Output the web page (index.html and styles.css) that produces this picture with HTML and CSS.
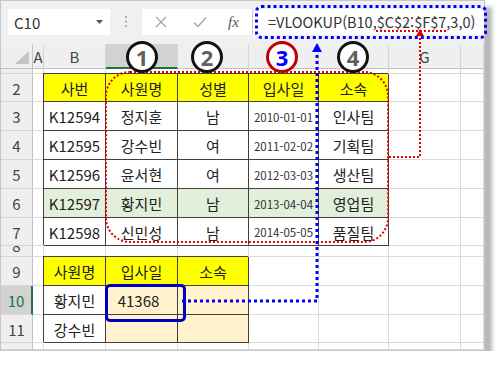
FILE: index.html
```html
<!DOCTYPE html>
<html lang="ko">
<head>
<meta charset="utf-8">
<title>VLOOKUP</title>
<link rel="stylesheet" href="styles.css">
</head>
<body>
<div class="frame">
  <div class="fbar">
    <div class="namebox"><span>C10</span><svg width="7" height="4" viewBox="0 0 7 4"><polygon points="0,0 7,0 3.5,4" fill="#555"/></svg></div>
    <div class="sep"><svg width="4" height="14" viewBox="0 0 4 14"><circle cx="2" cy="2" r="1" fill="#999"/><circle cx="2" cy="6.5" r="1" fill="#999"/><circle cx="2" cy="11" r="1" fill="#999"/></svg></div>
    <div class="btns">
      <svg class="x" width="12" height="12" viewBox="0 0 12 12"><path d="M1 1L11 11M11 1L1 11" stroke="#a8a8a8" stroke-width="1.4" fill="none"/></svg>
      <svg class="ok" width="14" height="12" viewBox="0 0 14 12"><path d="M1 6.5L5 10.5L13 1.5" stroke="#a8a8a8" stroke-width="1.5" fill="none"/></svg>
      <span class="fx">fx</span>
    </div>
    <div class="formula">=VLOOKUP(B10,<span class="ref">$C$2:$F$7</span>,3,0)</div>
  </div>
  <div class="sheet">
    <div class="c corner"><svg width="14" height="13" viewBox="0 0 14 13"><polygon points="0,13 14,0 14,13" fill="#c4c4c4"/></svg></div>
    <div class="c ch">A</div><div class="c ch">B</div><div class="c ch sel"></div><div class="c ch"></div><div class="c ch"></div><div class="c ch"></div><div class="c ch">G</div><div class="c ch"></div>

    <div class="c rh"></div><div class="c"></div><div class="c"></div><div class="c"></div><div class="c"></div><div class="c"></div><div class="c"></div><div class="c"></div><div class="c"></div>

    <div class="c rh">2</div><div class="c"></div><div class="c t y">사번</div><div class="c t y">사원명</div><div class="c t y">성별</div><div class="c t y">입사일</div><div class="c t y">소속</div><div class="c"></div><div class="c"></div>

    <div class="c rh">3</div><div class="c"></div><div class="c t">K12594</div><div class="c t">정지훈</div><div class="c t">남</div><div class="c t d">2010-01-01</div><div class="c t">인사팀</div><div class="c"></div><div class="c"></div>

    <div class="c rh">4</div><div class="c"></div><div class="c t">K12595</div><div class="c t">강수빈</div><div class="c t">여</div><div class="c t d">2011-02-02</div><div class="c t">기획팀</div><div class="c"></div><div class="c"></div>

    <div class="c rh">5</div><div class="c"></div><div class="c t">K12596</div><div class="c t">윤서현</div><div class="c t">여</div><div class="c t d">2012-03-03</div><div class="c t">생산팀</div><div class="c"></div><div class="c"></div>

    <div class="c rh">6</div><div class="c"></div><div class="c t g">K12597</div><div class="c t g">황지민</div><div class="c t g">남</div><div class="c t g d">2013-04-04</div><div class="c t g">영업팀</div><div class="c"></div><div class="c"></div>

    <div class="c rh">7</div><div class="c"></div><div class="c t">K12598</div><div class="c t">신민성</div><div class="c t">남</div><div class="c t d">2014-05-05</div><div class="c t">품질팀</div><div class="c"></div><div class="c"></div>

    <div class="c rh r8"><span>8</span></div><div class="c"></div><div class="c"></div><div class="c"></div><div class="c"></div><div class="c"></div><div class="c"></div><div class="c"></div><div class="c"></div>

    <div class="c rh">9</div><div class="c"></div><div class="c t y">사원명</div><div class="c t y">입사일</div><div class="c t y">소속</div><div class="c"></div><div class="c"></div><div class="c"></div><div class="c"></div>

    <div class="c rh sel">10</div><div class="c"></div><div class="c t">황지민</div><div class="c t o cur">41368</div><div class="c t o"></div><div class="c"></div><div class="c"></div><div class="c"></div><div class="c"></div>

    <div class="c rh">11</div><div class="c"></div><div class="c t">강수빈</div><div class="c t o"></div><div class="c t o"></div><div class="c"></div><div class="c"></div><div class="c"></div><div class="c"></div>

    <div class="c rh"></div><div class="c"></div><div class="c"></div><div class="c"></div><div class="c"></div><div class="c"></div><div class="c"></div><div class="c"></div><div class="c"></div>
  </div>

  <svg class="overlay" width="500" height="365" viewBox="0 0 500 365">
    <rect x="106" y="72" width="282" height="170" rx="24" ry="24" fill="none" stroke="#e00000" stroke-width="2" stroke-dasharray="2 2"/>
    <path d="M389 157H420V36" fill="none" stroke="#e00000" stroke-width="2" stroke-dasharray="2 2"/>
    <polygon points="420,29 416,36 424,36" fill="#e00000"/>
    <rect x="256.5" y="6.5" width="229" height="31" rx="5" ry="5" fill="none" stroke="#0000ff" stroke-width="3" stroke-dasharray="3 3"/>
    <path d="M182 301H317V52" fill="none" stroke="#0000ff" stroke-width="3" stroke-dasharray="3 3"/>
    <polygon points="317,43 312,52 322,52" fill="#0000ff"/>
  </svg>

  <div class="badge b1">1</div>
  <div class="badge b2">2</div>
  <div class="badge b3">3</div>
  <div class="badge b4">4</div>
</div>
</body>
</html>
```

FILE: styles.css
```css
* { box-sizing: border-box; }
body {
  margin: 0;
  background: #fff;
  color: #222;
  font-family: "Noto Sans CJK KR", "Noto Sans", sans-serif;
}
.frame {
  position: relative;
  width: 485px;
  height: 351px;
  border: 1px solid #c6c6c6;
  background: #f0f0f0;
  box-shadow: 7px 7px 4px #b8b8b8;
}
.fbar {
  height: 43px;
  display: flex;
  align-items: flex-start;
  padding: 8px 0 0 7px;
}
.namebox {
  width: 102px;
  height: 26px;
  background: #fff;
  display: flex;
  align-items: center;
  justify-content: space-between;
  padding: 0 7px 0 6px;
  font-size: 15px;
  color: #333;
}
.sep {
  width: 32px;
  height: 26px;
  display: flex;
  align-items: center;
  justify-content: center;
}
.btns {
  width: 110px;
  height: 26px;
  background: #fff;
  display: flex;
  align-items: center;
}
.x { margin-left: 13px; }
.ok { margin-left: 26px; }
.fx {
  margin-left: 21px;
  font-family: "Liberation Serif", serif;
  font-style: italic;
  font-size: 15px;
  color: #555;
}
.formula {
  flex: 1;
  height: 26px;
  background: #fff;
  border-left: 1px solid #d0d0d0;
  padding-left: 15px;
  font-size: 14.5px;
  line-height: 26px;
  color: #333;
  white-space: nowrap;
}
.ref {
  text-decoration: underline dotted #e00000;
  text-decoration-thickness: 2px;
  text-underline-offset: 2px;
}
.sheet {
  display: grid;
  grid-template-columns: 32px 11px 62px 72px 71px 70px 70px 72px 23px;
  grid-template-rows: 25px 5px 28px 29px 29px 29px 29px 28px 11px 29px 29px 28px 7px;
  overflow: hidden;
}
.c {
  display: flex;
  align-items: center;
  justify-content: center;
  overflow: hidden;
  background: #fff;
  border-right: 1px solid #dadada;
  border-bottom: 1px solid #dadada;
  font-size: 15px;
  white-space: nowrap;
  padding-top: 1px;
}
.ch {
  background: #efefef;
  border-right-color: #d6d6d6;
  border-bottom-color: #c2c2c2;
  color: #444;
}
.ch.sel {
  background: #d2d2d2;
  border-bottom: 2px solid #217346;
}
.corner {
  background: #efefef;
  border-right-color: #c2c2c2;
  border-bottom-color: #c2c2c2;
  justify-content: flex-end;
  align-items: flex-end;
  padding: 0 3px 4px 0;
}
.rh {
  background: #efefef;
  border-right-color: #c2c2c2;
  border-bottom-color: #d6d6d6;
  color: #444;
}
.rh.sel {
  background: #d2d2d2;
  border-right: 2px solid #217346;
  color: #217346;
}
.r8 { align-items: flex-start; }
.r8 span { display: block; line-height: 15px; margin-top: -9px; }
.t {
  border-right-color: #404040;
  border-bottom-color: #404040;
  box-shadow: -1px -1px 0 #404040;
  color: #222;
}
.y { background: #ffff00; }
.g { background: #e2efda; }
.o { background: #fff2cc; }
.d { font-size: 11.5px; color: #333; }
.cur { position: relative; overflow: visible; padding-right: 6px; }
.cur::after {
  content: "";
  position: absolute;
  left: -1px;
  top: -2px;
  width: 75px;
  height: 32px;
  border: 3px solid #0000c0;
  border-radius: 5px;
}
.overlay {
  position: absolute;
  left: -1px;
  top: -1px;
  pointer-events: none;
  overflow: visible;
}
.badge {
  position: absolute;
  top: 40px;
  width: 32px;
  height: 32px;
  border: 3.5px solid #111;
  border-radius: 50%;
  background: #fff;
  display: flex;
  align-items: center;
  justify-content: center;
  font-family: "Noto Sans", sans-serif;
  font-weight: bold;
  font-size: 22px;
  line-height: 1;
  color: #606060;
}
.b1 { left: 125px; }
.b2 { left: 190px; }
.b3 { left: 265px; border-color: #c00000; color: #0000ff; }
.b4 { left: 336px; }
```
